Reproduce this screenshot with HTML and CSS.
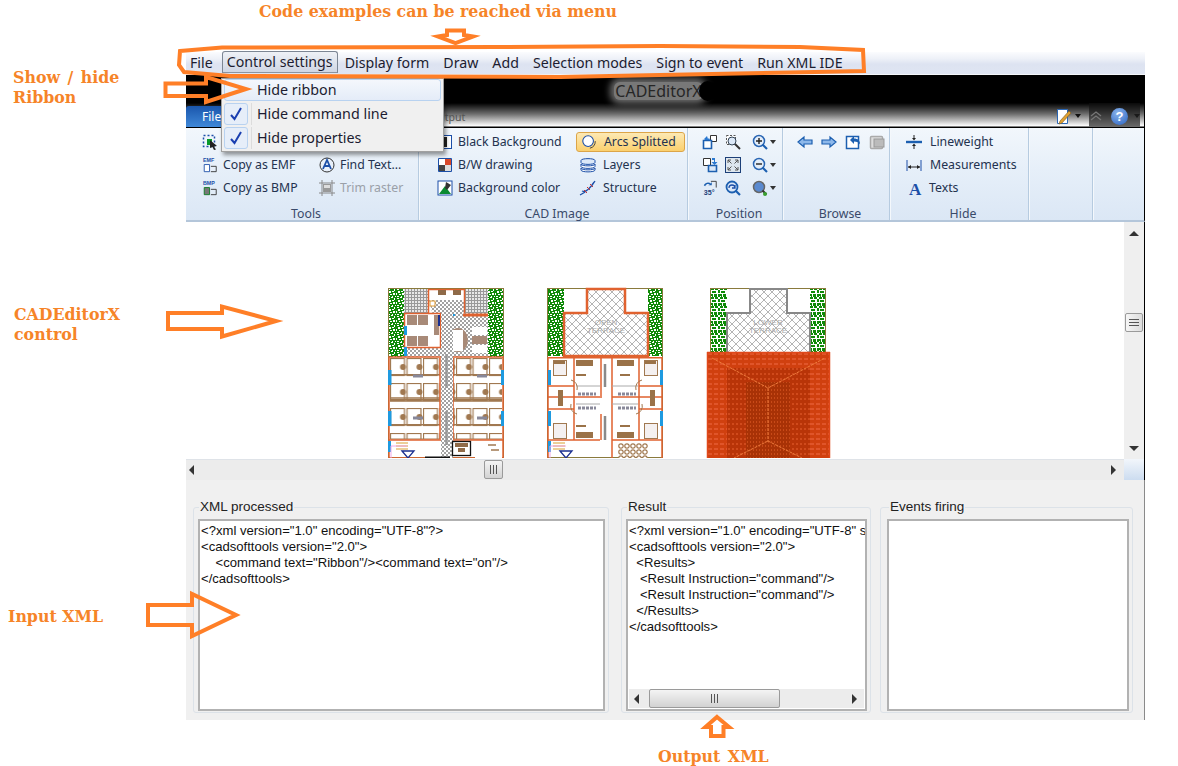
FILE: index.html
```html
<!DOCTYPE html>
<html lang="en">
<head>
<meta charset="utf-8">
<title>CADEditorX demo</title>
<link rel="stylesheet" href="styles.css">
</head>
<body>
<svg class="defs" width="0" height="0" aria-hidden="true">
  <defs>
    <symbol id="i-select" viewBox="0 0 16 16"><rect x="1.500" y="1.500" width="11" height="11" fill="none" stroke="#1c4fa8" stroke-width="1.500" stroke-dasharray="2 2"/><rect x="5" y="5" width="5" height="6" fill="#0a9a2a"/><path d="M8 6l7 6-3 .5 2 3-2 .5-1.500-3L8 14z" fill="#222"/></symbol>
    <symbol id="i-emf" viewBox="0 0 16 18"><text x="0" y="6" class="ico-txt">EMF</text><path d="M1.500 8.500h6v8h-6z" fill="#fff" stroke="#1c4fa8"/><path d="M9 10.500h6v6H9" fill="none" stroke="#333"/></symbol>
    <symbol id="i-bmp" viewBox="0 0 16 18"><text x="0" y="6" class="ico-txt">BMP</text><path d="M1.500 8.500h6v8h-6z" fill="#777" stroke="#0a7a20"/><path d="M9 10.500h6v6H9" fill="none" stroke="#333"/></symbol>
    <symbol id="i-find" viewBox="0 0 16 16"><circle cx="8" cy="8" r="7" fill="#e8f0fa" stroke="#333"/><path d="M4 12L8 3l4 9M5.500 9h5" fill="none" stroke="#1c4fa8" stroke-width="1.800"/></symbol>
    <symbol id="i-trim" viewBox="0 0 16 16"><path d="M3 0v16M13 0v16M0 3h16M0 13h16" stroke="#888" fill="none"/><rect x="4" y="4" width="8" height="8" fill="#999"/><rect x="5" y="5" width="6" height="3" fill="#ddd"/></symbol>
    <symbol id="i-black" viewBox="0 0 16 16"><rect x="1.500" y="1.500" width="13" height="13" fill="#fff" stroke="#1c4fa8"/><rect x="3" y="3" width="7" height="10" fill="#222"/></symbol>
    <symbol id="i-bw" viewBox="0 0 16 16"><rect x="1" y="1" width="14" height="14" rx="1" fill="#1c4fa8"/><path d="M2 2h6v6H2z" fill="#fff"/><path d="M8 2h6v6H8z" fill="#d9482a"/><path d="M2 8h6v6H2z" fill="#444"/><path d="M8 8h6v6H8z" fill="#ddd"/></symbol>
    <symbol id="i-bg" viewBox="0 0 16 16"><rect x="1" y="1" width="14" height="14" fill="#fff" stroke="#1c4fa8"/><path d="M2 14L8 6l6 8z" fill="#0a8a30"/><path d="M9 2l5 3-4 5-2-2z" fill="#333"/></symbol>
    <symbol id="i-arcs" viewBox="0 0 18 18"><circle cx="8" cy="8" r="6" fill="#fff" stroke="#1c4fa8" stroke-width="1.200"/><path d="M16 8a8 8 0 0 1-6 8" fill="none" stroke="#333"/></symbol>
    <symbol id="i-layers" viewBox="0 0 18 16"><path d="M2 3.500C2 1 16 1 16 3.500v2C16 8 2 8 2 5.500z" fill="#dbe8f8" stroke="#1c4fa8"/><path d="M2 7c0 2.500 14 2.500 14 0v2.500c0 2.500-14 2.500-14 0zM2 11c0 2.500 14 2.500 14 0v2c0 2.500-14 2.500-14 0z" fill="#fff" stroke="#1c4fa8"/></symbol>
    <symbol id="i-struct" viewBox="0 0 18 16"><path d="M1 15C5 13 12 8 16 1M3 11c4 2 8-3 12-9" fill="none" stroke="#1c4fa8" stroke-width="1.300"/><path d="M5 10l3 3M8 7l3 3M11 4l3 3" stroke="#c33" fill="none"/></symbol>
    <symbol id="i-p1" viewBox="0 0 16 16"><path d="M8.500 1.500h6v6h-6z" fill="#fff" stroke="#333"/><path d="M1.500 6.500h8v8h-8z" fill="#fff" stroke="#1c5fb0" stroke-width="1.600"/><path d="M2 5l3-3 1 3 1-1 1 2H3z" fill="#2a78d0"/></symbol>
    <symbol id="i-p2" viewBox="0 0 16 16"><path d="M1.500 1.500h7v7h-7z" fill="#fff" stroke="#333"/><path d="M6.500 8.500h8v6h-8z" fill="#dbe8f8" stroke="#1c5fb0" stroke-width="1.600"/><path d="M10 1h3v4h2.500L12.500 8 9.500 5H12V3h-2z" fill="#2a78d0"/></symbol>
    <symbol id="i-p3" viewBox="0 0 16 18"><path d="M9 1.500h6v7" fill="none" stroke="#333"/><path d="M1 6c2-4 6-4 8-2l1-2v4H6l2-1C6 4 4 4 2.500 7z" fill="#1c5fb0"/><text x="1" y="17" class="ico-deg">35°</text></symbol>
    <symbol id="i-zw" viewBox="0 0 16 16"><rect x="1.500" y="1.500" width="9" height="9" fill="#fff" stroke="#555" stroke-dasharray="2 1.500"/><circle cx="7" cy="7" r="4" fill="#dbe8f8" stroke="#345"/><path d="M10 10l5 5" stroke="#333" stroke-width="2"/></symbol>
    <symbol id="i-fit" viewBox="0 0 16 16"><rect x=".5" y=".5" width="15" height="15" fill="#dde6ee" stroke="#1c3f78"/><path d="M3 3l3.500 3.500M13 3L9.500 6.500M3 13l3.500-3.500M13 13L9.500 9.500M3 3h3M3 3v3M13 3h-3M13 3v3M3 13h3M3 13v-3M13 13h-3M13 13v-3" stroke="#555" fill="none"/></symbol>
    <symbol id="i-zprev" viewBox="0 0 16 16"><circle cx="7" cy="7" r="5.500" fill="#dbe8f8" stroke="#1c5fb0" stroke-width="1.800"/><path d="M10.500 10.500l4.500 4.500" stroke="#1c5fb0" stroke-width="2.200"/><path d="M4 8a3 3 0 0 1 6 0M10 5v3H7" fill="none" stroke="#1c4fa8" stroke-width="1.300"/></symbol>
    <symbol id="i-zin" viewBox="0 0 16 16"><circle cx="7" cy="7" r="5.500" fill="#e4eefa" stroke="#2a66b4" stroke-width="1.500"/><path d="M10.500 10.500l4.500 4.500" stroke="#1c5fb0" stroke-width="2.200"/><path d="M4 7h6M7 4v6" stroke="#222" stroke-width="1.400"/></symbol>
    <symbol id="i-zout" viewBox="0 0 16 16"><circle cx="7" cy="7" r="5.500" fill="#e4eefa" stroke="#2a66b4" stroke-width="1.500"/><path d="M10.500 10.500l4.500 4.500" stroke="#1c5fb0" stroke-width="2.200"/><path d="M4 7h6" stroke="#222" stroke-width="1.400"/></symbol>
    <symbol id="i-zglobe" viewBox="0 0 16 16"><circle cx="7" cy="7" r="5.500" fill="#5a8ad0" stroke="#666" stroke-width="1.500"/><path d="M10.500 10.500l4 4" stroke="#333" stroke-width="2"/><circle cx="13" cy="14" r="2" fill="#3aa030"/></symbol>
    <symbol id="i-left" viewBox="0 0 16 16"><path d="M1 8l6-5v3h8v4H7v3z" fill="#8db8ea" stroke="#1c5fb0" stroke-width="1.200"/></symbol>
    <symbol id="i-right" viewBox="0 0 16 16"><path d="M15 8L9 3v3H1v4h8v3z" fill="#8db8ea" stroke="#1c5fb0" stroke-width="1.200"/></symbol>
    <symbol id="i-undo" viewBox="0 0 16 16"><rect x="1.500" y="2.500" width="12" height="12" fill="#fff" stroke="#1c5fb0" stroke-width="1.500"/><path d="M5 6l4-4v2.500c4 0 6 2 6 6-1-2-3-3-6-3V10z" fill="#1c5fb0"/></symbol>
    <symbol id="i-redo" viewBox="0 0 16 16"><rect x="1.500" y="2.500" width="12" height="12" rx="1" fill="#ddd" stroke="#aaa" stroke-width="1.500"/><rect x="5" y="5" width="10" height="8" fill="#bbb" stroke="#999"/></symbol>
    <symbol id="i-lw" viewBox="0 0 16 16"><path d="M0 8h16" stroke="#1c5fb0" stroke-width="2.400"/><path d="M8 1v4M8 15v-4" stroke="#222"/><path d="M6 4h4L8 6.500zM6 12h4L8 9.500z" fill="#222"/></symbol>
    <symbol id="i-meas" viewBox="0 0 16 16"><path d="M1 3v11M15 3v11" stroke="#1c4fa8"/><path d="M2 10h12" stroke="#222"/><path d="M2 10l3-2v4zM14 10l-3-2v4z" fill="#222"/></symbol>
    <symbol id="i-text" viewBox="0 0 16 16"><text x="1" y="15" class="ico-a">A</text></symbol>
    <pattern id="p-green" width="9" height="9" patternUnits="userSpaceOnUse"><rect width="9" height="9" fill="#0f8a08"/><path d="M1 1h2v1H1zM4 0h2v1H4zM7 1h1v2H7zM2 3h2v2H2zM5 3h2v1H5zM0 5h1v2H0zM3 6h2v1H3zM6 5h2v2H6zM8 8h1v1H8zM1 8h2v1H1zM5 8h1v1H5z" fill="#fff"/></pattern>
    <pattern id="p-green2" width="9" height="9" patternUnits="userSpaceOnUse"><rect width="9" height="9" fill="#fff"/><path d="M0 0h3v2H0zM4 0h3v2H4zM7 2h2v3H7zM1 3h4v2H1zM0 6h2v2H0zM3 6h3v3H3zM7 6h2v3H7zM1 8h1v1H1z" fill="#0f8a08"/></pattern>
    <pattern id="p-cross" width="8" height="8" patternUnits="userSpaceOnUse"><rect width="8" height="8" fill="#fff"/><path d="M0 0l8 8M8 0L0 8" stroke="#b4b4b4"/></pattern>
    <pattern id="p-grid" width="3" height="3" patternUnits="userSpaceOnUse"><rect width="3" height="3" fill="#e8e8e8"/><path d="M0 .5h3M.5 0v3" stroke="#999"/></pattern>
    <pattern id="p-check" width="4" height="4" patternUnits="userSpaceOnUse"><rect width="4" height="4" fill="#fff"/><path d="M0 0h2v2H0zM2 2h2v2H2z" fill="#a2a2a2"/></pattern>
    <pattern id="p-desk" x="390" y="358" width="16.500" height="25" patternUnits="userSpaceOnUse"><rect x=".5" y=".5" width="14" height="17" fill="#fff" stroke="#a07850" stroke-width="1.200"/><circle cx="13" cy="9" r="3" fill="#a07850"/><rect x="0" y="16" width="16.500" height="1.500" fill="#a07850"/></pattern>
    <pattern id="p-chair" x="618" y="443" width="6" height="6" patternUnits="userSpaceOnUse"><circle cx="3" cy="3" r="2.200" fill="#fff" stroke="#a07850" stroke-width="1.200"/></pattern>
    <pattern id="p-roof" x="707" y="352" width="6" height="5" patternUnits="userSpaceOnUse"><rect width="6" height="5" fill="#d0400f"/><rect x="1" y="1" width="4" height="2" fill="#e0552a"/></pattern>
    <pattern id="p-roof2" x="707" y="352" width="4" height="5" patternUnits="userSpaceOnUse"><rect width="4" height="5" fill="#b83408"/><rect x="1" y="1" width="2" height="2" fill="#d04a1c"/></pattern>
    <pattern id="p-roof3" x="707" y="352" width="3" height="4" patternUnits="userSpaceOnUse"><rect width="3" height="4" fill="#a83206"/><rect x="1" y="1" width="1" height="2" fill="#c84a18"/></pattern>
  </defs>
</svg>

<main class="app">
  <nav class="menubar">
    <span class="menu-item">File</span>
    <span class="menu-item is-open">Control settings</span>
    <span class="menu-item">Display form</span>
    <span class="menu-item">Draw</span>
    <span class="menu-item">Add</span>
    <span class="menu-item">Selection modes</span>
    <span class="menu-item">Sign to event</span>
    <span class="menu-item">Run XML IDE</span>
    <ul class="dropdown">
      <li class="drop-row is-hover"><span class="check-slot"></span><span>Hide ribbon</span></li>
      <li class="drop-row"><span class="check-slot is-checked"><svg width="14" height="14" viewBox="0 0 14 14"><path d="M2 8l3.500 4L12 1" fill="none" stroke="#1a3fb0" stroke-width="2"/></svg></span><span>Hide command line</span></li>
      <li class="drop-row"><span class="check-slot is-checked"><svg width="14" height="14" viewBox="0 0 14 14"><path d="M2 8l3.500 4L12 1" fill="none" stroke="#1a3fb0" stroke-width="2"/></svg></span><span>Hide properties</span></li>
    </ul>
  </nav>

  <header class="titlebar">
    <div class="title"><span class="title-text">CADEditorX</span><span class="title-blob"></span></div>
    <div class="tabs">
      <span class="tab-file">File</span>
      <span class="tab-output">Output</span>
      <div class="qat">
        <svg width="18" height="18" viewBox="0 0 18 18"><path d="M2.500 2.500h10v14h-10z" fill="#fff" stroke="#2a66b4"/><path d="M5 14l9-10 2 2-9 10-3 1z" fill="#e0a030" stroke="#7a5a20" stroke-width=".6"/></svg>
        <span class="caret caret-black"></span>
        <svg class="qat-up" width="14" height="12" viewBox="0 0 14 12"><path d="M2 6l5-4 5 4M2 10l5-4 5 4" fill="none" stroke="#777" stroke-width="1.300"/></svg>
        <span class="help">?</span>
        <span class="caret caret-dark"></span>
      </div>
    </div>
  </header>

  <section class="ribbon">
    <div class="rgroup g-tools">
      <div class="rgrid tools-grid">
        <span class="ritem"><svg class="ico"><use href="#i-select"/></svg></span>
        <span class="ritem"></span>
        <span class="ritem"><svg class="ico"><use href="#i-emf"/></svg>Copy as EMF</span>
        <span class="ritem"><svg class="ico"><use href="#i-find"/></svg>Find Text...</span>
        <span class="ritem"><svg class="ico"><use href="#i-bmp"/></svg>Copy as BMP</span>
        <span class="ritem is-disabled"><svg class="ico"><use href="#i-trim"/></svg>Trim raster</span>
      </div>
      <div class="rlabel">Tools</div>
    </div>
    <div class="rgroup g-cad">
      <div class="rgrid cad-grid">
        <span class="ritem"><svg class="ico"><use href="#i-black"/></svg>Black Background</span>
        <span class="ritem is-active"><svg class="ico ico-lg"><use href="#i-arcs"/></svg>Arcs Splitted</span>
        <span class="ritem"><svg class="ico"><use href="#i-bw"/></svg>B/W drawing</span>
        <span class="ritem is-pad"><svg class="ico ico-lg"><use href="#i-layers"/></svg>Layers</span>
        <span class="ritem"><svg class="ico"><use href="#i-bg"/></svg>Background color</span>
        <span class="ritem is-pad"><svg class="ico ico-lg"><use href="#i-struct"/></svg>Structure</span>
      </div>
      <div class="rlabel">CAD Image</div>
    </div>
    <div class="rgroup g-pos">
      <div class="rgrid pos-grid">
        <svg class="ico"><use href="#i-p1"/></svg><svg class="ico"><use href="#i-zw"/></svg><span class="drop-ico"><svg class="ico"><use href="#i-zin"/></svg><span class="caret"></span></span>
        <svg class="ico"><use href="#i-p2"/></svg><svg class="ico"><use href="#i-fit"/></svg><span class="drop-ico"><svg class="ico"><use href="#i-zout"/></svg><span class="caret"></span></span>
        <svg class="ico"><use href="#i-p3"/></svg><svg class="ico"><use href="#i-zprev"/></svg><span class="drop-ico"><svg class="ico"><use href="#i-zglobe"/></svg><span class="caret"></span></span>
      </div>
      <div class="rlabel">Position</div>
    </div>
    <div class="rgroup g-browse">
      <div class="browse-row">
        <svg class="ico"><use href="#i-left"/></svg><svg class="ico"><use href="#i-right"/></svg><svg class="ico"><use href="#i-undo"/></svg><svg class="ico"><use href="#i-redo"/></svg>
      </div>
      <div class="rlabel">Browse</div>
    </div>
    <div class="rgroup g-hide">
      <div class="rgrid hide-grid">
        <span class="ritem"><svg class="ico"><use href="#i-lw"/></svg>Lineweight</span>
        <span class="ritem"><svg class="ico"><use href="#i-meas"/></svg>Measurements</span>
        <span class="ritem ritem-tight"><svg class="ico"><use href="#i-text"/></svg>Texts</span>
      </div>
      <div class="rlabel">Hide</div>
    </div>
    <div class="rgroup g-e1"></div>
    <div class="rgroup g-e2"></div>
  </section>

  <section class="viewport">
    <div class="drawing">
      <svg class="plans" width="938" height="236" viewBox="186 222 938 236">
        <!-- plan 1 -->
        <rect x="388.500" y="288.500" width="115" height="169" fill="#fff" stroke="#8a7a3c"/>
        <rect x="389" y="289" width="15" height="68" fill="url(#p-green)"/>
        <rect x="488" y="289" width="15" height="68" fill="url(#p-green)"/>
        <rect x="404" y="289" width="24" height="24" fill="url(#p-grid)"/>
        <rect x="465" y="289" width="23" height="24" fill="url(#p-grid)"/>
        <path d="M429 300h35v13h-23v44h-37v-10h37M441 313h12v145h-12z" fill="url(#p-check)"/>
        <rect x="441" y="313" width="47" height="44" fill="url(#p-check)"/>
        <rect x="404" y="347" width="37" height="10" fill="url(#p-check)"/>
        <path d="M428.500 313V289.500h36V313" fill="none" stroke="#e0622f" stroke-width="1.500"/>
        <rect x="438" y="290" width="8" height="5" fill="#8f6a48"/><rect x="453" y="290" width="8" height="5" fill="#8f6a48"/>
        <rect x="430" y="301" width="5" height="5" fill="#fff" stroke="#e09a30"/>
        <rect x="404.500" y="313.500" width="36" height="34" fill="#fff" stroke="#e0622f" stroke-width="1.500"/>
        <rect x="407" y="315" width="10" height="10" fill="#a88a78"/><rect x="418" y="315" width="10" height="10" fill="#a88a78"/>
        <rect x="407" y="336" width="10" height="10" fill="#a88a78"/><rect x="418" y="336" width="10" height="10" fill="#a88a78"/>
        <rect x="434" y="315" width="5" height="20" fill="#a88a78"/>
        <rect x="438" y="315" width="2" height="11" fill="#1a2f90"/>
        <rect x="441" y="314" width="14" height="2" fill="#1e9ae0"/>
        <rect x="404" y="326" width="3" height="9" fill="#1e9ae0"/><rect x="404" y="347" width="3" height="9" fill="#1e9ae0"/>
        <path d="M463 313.500h25v3h-25zM453 316h35" fill="#e0622f"/>
        <rect x="472" y="327" width="15" height="8" fill="#fff"/><rect x="472" y="345" width="15" height="8" fill="#fff"/>
        <rect x="472" y="336" width="15" height="8" fill="#a88a78"/>
        <ellipse cx="458" cy="340" rx="10" ry="12" fill="#a88a78"/>
        <rect x="453" y="330" width="10" height="21" fill="#fff"/>
        <rect x="389" y="357" width="114" height="101" fill="none" stroke="#e0622f" stroke-width="1.500"/>
        <rect x="390" y="358" width="50" height="81" fill="url(#p-desk)"/>
        <rect x="453" y="358" width="49" height="81" fill="url(#p-desk)"/>
        <path d="M390 398h50M453 398h49M390 401h50M453 401h49" stroke="#a07850" stroke-width="1.500"/>
        <path d="M390 439h50M453 439h49" stroke="#a07850"/>
        <path d="M440 358v81M453 358v81" stroke="#e0622f" stroke-width="1.500"/>
        <path d="M389 440h52M453 440h50" stroke="#e0622f" stroke-width="1.500"/>
        <rect x="441" y="313" width="12" height="145" fill="url(#p-check)"/>
        <path d="M446.500 354v34M446.500 411v34" stroke="#999" stroke-width="2.500"/>
        <path d="M413 376h10M477 376h10M413 418h10M477 418h10" stroke="#889" stroke-width="3"/>
        <path d="M388 370h3.500v15H388zM501 370h3v15h-3zM388 411h3.500v15H388zM501 411h3v15h-3zM388 441h3v11h-3z" fill="#1e9ae0"/>
        <path d="M396 443h12M396 446h12M396 449h12" stroke="#d9a030"/><path d="M395 446h-4v12M395 446h12" stroke="#f0a8e8" fill="none"/>
        <path d="M402 451l6 7 6-7z" fill="none" stroke="#1a2f90" stroke-width="1.300"/>
        <rect x="452.500" y="441.500" width="18" height="14" fill="#fff" stroke="#111" stroke-width="1.300"/>
        <rect x="455" y="443" width="13" height="4" fill="#8f6a48"/><rect x="458" y="448" width="7" height="4" fill="#8f6a48"/>
        <rect x="425" y="456.500" width="25" height="2" fill="#111"/>
        <path d="M475 441h27v17h-27z" fill="#fff"/><path d="M488 445h8M491 450h8" stroke="#a07850" stroke-width="1.500"/>
        <!-- plan 2 -->
        <rect x="547.500" y="288.500" width="115" height="169" fill="#fff" stroke="#8a7a3c"/>
        <rect x="548" y="289" width="16" height="67" fill="url(#p-green)"/>
        <rect x="648" y="289" width="14" height="67" fill="url(#p-green)"/>
        <path d="M564 313h23v-24h38v24h23v43h-84z" fill="url(#p-cross)" stroke="#e0622f" stroke-width="2.500"/>
        <text x="606" y="325" class="plan-txt">OPEN</text><text x="606" y="333" class="plan-txt">TERRACE</text>
        <rect x="548" y="357" width="114" height="1.500" fill="#e0622f"/>
        <path d="M548 357v101M662 357v101M574 358v82M601 358v40M612 358v82M639 358v82M548 386h26M639 386h23M548 397h52M612 397h50M548 409h26M639 409h23M548 440h52M612 440h50M612 440v18" fill="none" stroke="#e0622f" stroke-width="1.500"/>
        <path d="M601 414v26" stroke="#e0622f" stroke-width="1.500"/>
        <path d="M605 364v23M605 416v24" stroke="#8a8a8a" stroke-width="2.500"/>
        <path d="M548 370h3v15h-3zM660 370h3v15h-3zM548 411h3v15h-3zM660 411h3v15h-3zM548 441h3v11h-3z" fill="#1e9ae0"/>
        <g fill="#f4f0f0" stroke="#a07850"><rect x="553.500" y="360.500" width="13" height="15"/><rect x="553.500" y="423.500" width="13" height="15"/><rect x="644.500" y="360.500" width="13" height="15"/><rect x="644.500" y="423.500" width="13" height="15"/></g>
        <g fill="#9a7248"><rect x="576" y="360" width="17" height="6"/><rect x="576" y="432" width="17" height="6"/><rect x="617" y="360" width="17" height="6"/><rect x="617" y="432" width="17" height="6"/><rect x="554" y="361" width="11" height="3"/><rect x="645" y="361" width="11" height="3"/><rect x="558" y="390" width="5" height="16" /><rect x="650" y="390" width="5" height="16"/></g>
        <path d="M576 375h10M620 375h10M576 426h10M620 426h10" stroke="#9a7248" stroke-width="2"/>
        <path d="M576 386h24M612 386h26M576 404h24M612 404h26" stroke="#aaa"/>
        <path d="M578 394h18M618 394h18M578 408h18M618 408h18" stroke="#889" stroke-width="3" stroke-dasharray="3 1"/>
        <path d="M571 380a8 8 0 0 1 6 10M571 404a8 8 0 0 0 6 10M642 380a8 8 0 0 0-6 10M642 404a8 8 0 0 1-6 10" fill="none" stroke="#a07850"/>
        <rect x="618" y="443" width="30" height="15" fill="url(#p-chair)"/>
        <path d="M553 443h12M553 446h12M553 449h12" stroke="#d9a030"/><path d="M554 446h-4v12M554 446h12" stroke="#f0a8e8" fill="none"/>
        <path d="M560 451l6 7 6-7z" fill="none" stroke="#1a2f90" stroke-width="1.300"/>
        <!-- plan 3 -->
        <rect x="710.500" y="288.500" width="115" height="64" fill="#fff" stroke="#8a7a3c"/>
        <rect x="711" y="289" width="16" height="63" fill="url(#p-green2)"/>
        <rect x="810" y="289" width="15" height="63" fill="url(#p-green2)"/>
        <path d="M727 352v-39h23v-24h37v24h23v39" fill="url(#p-cross)" stroke="#888" stroke-width="2"/>
        <text x="768" y="325" class="plan-txt">LOWER</text><text x="768" y="333" class="plan-txt">TERRACE</text>
        <rect x="707" y="352" width="123" height="106" fill="url(#p-roof)"/>
        <rect x="727" y="368" width="83" height="90" fill="url(#p-roof2)"/>
        <rect x="746" y="382" width="44" height="76" fill="url(#p-roof3)"/>
        <path d="M707 352.500h123M707.500 352v106M829.500 352v106" stroke="#e0481a" stroke-width="1.500" fill="none"/>
        <path d="M712 358l56 30 57-30M768 388v53M768 441l-34 17M768 441l34 17" stroke="#ee7a3c" fill="none" stroke-dasharray="3 1"/>
      </svg>
    </div>
    <div class="vscroll">
      <span class="tri tri-up"></span>
      <span class="v-thumb"><i></i><i></i><i></i></span>
      <span class="tri tri-down"></span>
    </div>
  </section>
  <div class="hscroll-row">
    <div class="hscroll">
      <span class="tri tri-left"></span>
      <span class="h-thumb"><i></i><i></i><i></i></span>
      <span class="tri tri-right"></span>
    </div>
    <div class="corner"></div>
  </div>

  <section class="panels">
    <fieldset class="box box-xml">
      <legend>XML processed</legend>
      <pre class="code">&lt;?xml version="1.0" encoding="UTF-8"?&gt;
&lt;cadsofttools version="2.0"&gt;
    &lt;command text="Ribbon"/&gt;&lt;command text="on"/&gt;
&lt;/cadsofttools&gt;</pre>
    </fieldset>
    <fieldset class="box box-result">
      <legend>Result</legend>
      <div class="code-wrap">
        <pre class="code code-clip">&lt;?xml version="1.0" encoding="UTF-8" s
&lt;cadsofttools version="2.0"&gt;
  &lt;Results&gt;
   &lt;Result Instruction="command"/&gt;
   &lt;Result Instruction="command"/&gt;
  &lt;/Results&gt;
&lt;/cadsofttools&gt;</pre>
        <div class="mini-scroll">
          <span class="tri tri-left"></span>
          <span class="mini-thumb"><i></i><i></i><i></i></span>
          <span class="tri tri-right"></span>
        </div>
      </div>
    </fieldset>
    <fieldset class="box box-events">
      <legend>Events firing</legend>
      <div class="code"></div>
    </fieldset>
  </section>
</main>

<p class="note note-top">Code examples can be reached via menu</p>
<p class="note note-ribbon">Show / hide<br>Ribbon</p>
<p class="note note-control">CADEditorX<br>control</p>
<p class="note note-input">Input XML</p>
<p class="note note-output">Output XML</p>

<svg class="arrows" width="1178" height="766" viewBox="0 0 1178 766" aria-hidden="true">
  <path class="mark" d="M180 51L222 47.500L500 47L660 46L800 47L863 50L864 71L790 72.500L660 75L560 77L230 76L184 72L179 65Z"/>
  <path class="mark mark-fill" d="M447 30.500H464V35L473 36.500L455.500 43L438 36.500L447 35Z"/>
  <path class="mark" d="M165.500 83.500H206V77L246 89L206 102V96H165.500Z"/>
  <path class="mark" d="M168 313H222V306.500L276 321L222 336.500V329H168Z"/>
  <path class="mark" d="M148 605H192V594L236 615L192 636V625H148Z"/>
  <path class="mark mark-fill" d="M717 717L729 727H723.500V736H711V727H705.500Z"/>
</svg>
</body>
</html>
```

FILE: styles.css
```css
* { box-sizing: border-box; }
html, body { margin: 0; padding: 0; }
body {
  position: relative;
  width: 1178px;
  height: 766px;
  overflow: hidden;
  background: #fff;
  font-family: "Noto Sans", "Open Sans", sans-serif;
  color: #1a1a2a;
}
.defs { position: absolute; }
.ico-txt { font: 700 6px "Liberation Sans", sans-serif; fill: #1c4fa8; }
.ico-deg { font: 700 8px "Liberation Sans", sans-serif; fill: #1c3f78; }
.ico-a { font: 700 17px "Liberation Serif", serif; fill: #1c4fa8; }
.plan-txt { font: 8px "Liberation Sans", sans-serif; fill: #aaa; text-anchor: middle; }

.app {
  width: 959px;
  margin: 52px 0 0 186px;
  display: flex;
  flex-direction: column;
}

/* menu */
.menubar {
  position: relative;
  height: 23px;
  display: flex;
  align-items: center;
  gap: 14px;
  padding: 0 0 2px 4px;
  font-size: 14.200px;
  background: linear-gradient(#fbfcfe 0, #eef1f8 30%, #dde3f1 55%, #dfe5f2 100%);
  border-bottom: 1px solid #f4f6fa;
  color: #1c1c30;
}
.menu-item { white-space: nowrap; }
.menu-item.is-open {
  margin: 0 -7px 0 -5px;
  padding: 0 4px;
  height: 22px;
  line-height: 20px;
  border: 1px solid #7c8694;
  border-bottom-color: #8a94a2;
  border-radius: 3px 3px 0 0;
  background: linear-gradient(#eef1f6, #cfd6e4);
}
.dropdown {
  position: absolute;
  left: 35px;
  top: 26px;
  width: 223px;
  height: 74px;
  margin: 0;
  padding: 0 2px;
  list-style: none;
  background: #f0f0f0;
  border: 1px solid #a0a0a0;
  box-shadow: 2px 3px 4px rgba(0, 0, 0, .4);
  z-index: 3;
}
.drop-row {
  height: 24px;
  display: flex;
  align-items: center;
  gap: 5px;
  font-size: 14.300px;
  color: #1c1c30;
  border: 1px solid transparent;
  border-radius: 3px;
  background: linear-gradient(#dcdcdc, #dcdcdc) 26px 0 / 1px 100% no-repeat;
}
.drop-row > span:last-child { margin-top: -2px; }
.drop-row.is-hover {
  height: 22px;
  margin-bottom: 1px;
  background: linear-gradient(#f4f7fc, #e4ecf8);
  border-color: #b8d2f0;
}
.check-slot {
  width: 24px;
  height: 100%;
  display: flex;
  align-items: center;
  justify-content: center;
  margin-left: -1px;
  flex: none;
  margin-right: 4px;
}
.check-slot.is-checked {
  background: #e6eef9;
  border: 1px solid #b8d2f0;
  border-radius: 3px;
}

/* title */
.titlebar {
  height: 53px;
  display: flex;
  flex-direction: column;
  background: linear-gradient(#000 0, #000 28px, #6e6e6e 39px, #e8e8e8 49px, #fff 51px, #000 52px);
  border-right: 1px solid #000;
}
.title {
  height: 28px;
  display: flex;
  align-items: center;
  justify-content: center;
  padding-top: 4px;
}
.title-text {
  padding: 0 1px;
  height: 18px;
  line-height: 18px;
  font-size: 16px;
  color: #262626;
  background: #787878;
  border-radius: 6px;
  box-shadow: 0 0 7px 4px #6a6a6a;
}
.title-blob {
  position: relative;
  width: 17px;
  height: 20px;
  margin-left: -4px;
  border-radius: 50%;
  background: #000;
}
.tabs {
  height: 24px;
  display: flex;
  align-items: flex-end;
  position: relative;
}
.tab-file {
  width: 40px;
  height: 21px;
  padding: 2px 0 0 16px;
  font-size: 12px;
  color: #fff;
  background: linear-gradient(#1a56ac, #3f88d8);
  border-radius: 3px 3px 0 0;
}
.tab-output {
  margin: 0 0 1px 204px;
  font-size: 10.500px;
  line-height: 18px;
  color: #555;
}
.qat {
  margin-left: auto;
  margin-right: 4px;
  height: 24px;
  display: flex;
  align-items: center;
  padding-top: 2px;
  background: linear-gradient(#0a0a0a, #6a6a6a) 34px 0 / 100% 100% no-repeat;
}
.qat-up { margin: 0 8px 0 8px; }
.help {
  width: 17px;
  height: 17px;
  border-radius: 50%;
  background: radial-gradient(circle at 40% 30%, #8ab4ec, #2a62c0);
  color: #fff;
  font: 700 13px/17px "Liberation Sans", sans-serif;
  text-align: center;
}
.caret {
  display: inline-block;
  width: 0;
  height: 0;
  margin-left: 2px;
  border: 3.500px solid transparent;
  border-top: 4px solid #333;
  border-bottom: 0;
}
.caret-black { border-top-color: #111; }
.caret-dark { margin-left: 6px; border-top-color: #1a1a1a; }

/* ribbon */
.ribbon {
  height: 94px;
  display: flex;
  background: linear-gradient(#f2f7fc 0, #e6eff9 45%, #dbe7f5 100%);
  border-bottom: 2px solid #b4c6da;
  border-right: 1px solid #000;
  font-size: 12.300px;
}
.rgroup {
  display: flex;
  flex-direction: column;
  justify-content: space-between;
  padding-top: 2px;
  border-right: 1px solid #b6cbe0;
  box-shadow: 1px 0 0 #f4f8fc;
  flex: none;
}
.g-tools { width: 233px; }
.g-cad { width: 269px; }
.g-pos { width: 95px; }
.g-browse { width: 107px; }
.g-hide { width: 139px; }
.g-e1 { width: 64px; }
.g-e2 { flex: 1; border-right: 0; box-shadow: none; }
.rlabel {
  height: 12px;
  padding-left: 8px;
  line-height: 12px;
  text-align: center;
  color: #3a4a6a;
  font-size: 12.300px;
}
.rgrid { display: grid; grid-auto-rows: 23px; align-items: center; }
.tools-grid { grid-template-columns: 117px 1fr; padding-left: 16px; }
.cad-grid { grid-template-columns: 139px 1fr; padding-left: 18px; }
.pos-grid { grid-template-columns: 23px 27px 1fr; padding-left: 14px; }
.hide-grid { grid-template-columns: 1fr; padding-left: 16px; }
.browse-row { display: flex; gap: 8px; padding: 4px 0 0 14px; height: 23px; }
.ritem {
  display: flex;
  align-items: center;
  gap: 5px;
  white-space: nowrap;
  height: 20px;
  color: #23324f;
}
.is-disabled { color: #9aa0a8; }
.is-active {
  margin-right: 2px;
  padding-left: 3px;
  gap: 6px;
  border: 1px solid #dca548;
  border-radius: 3px;
  background: linear-gradient(#fde9b4, #fbd06e);
}
.is-pad { padding-left: 3px; gap: 6px; }
.ico { width: 16px; height: 16px; flex: none; display: block; }
.ico-lg { width: 18px; height: 16px; }
.g-hide .ico { margin-right: 3px; }
.g-hide .ritem-tight { padding-left: 2px; }
.g-hide .ritem-tight .ico { margin-right: 0; }
.drop-ico { display: flex; align-items: center; }

/* viewport */
.viewport {
  height: 237px;
  display: flex;
  background: #fff;
  border-right: 1px solid #000;
}
.drawing { flex: 1; min-width: 0; overflow: hidden; }
.plans { display: block; }
.vscroll {
  width: 20px;
  flex: none;
  position: relative;
  background: #efefef;
}
.tri { position: absolute; width: 0; height: 0; border: 5px solid transparent; }
.tri-up { top: 9px; left: 5px; border-bottom: 5px solid #333; border-top: 0; }
.tri-down { bottom: 8px; left: 5px; border-top: 5px solid #333; border-bottom: 0; }
.tri-left { left: 3px; top: 5px; border-right: 5px solid #333; border-left: 0; }
.tri-right { right: 8px; top: 5px; border-left: 5px solid #333; border-right: 0; }
.v-thumb {
  position: absolute;
  top: 91px;
  left: 1px;
  width: 18px;
  height: 19px;
  display: flex;
  flex-direction: column;
  align-items: center;
  justify-content: center;
  gap: 2px;
  background: linear-gradient(90deg, #f6f6f6, #dcdcdc);
  border: 1px solid #9a9a9a;
  border-radius: 2px;
}
.v-thumb i { width: 10px; height: 1px; background: #555; }
.hscroll-row { height: 21px; display: flex; border-right: 1px solid #000; }
.hscroll {
  flex: 1;
  position: relative;
  background: #ececec;
  border-top: 1px solid #dfe3e8;
}
.corner { width: 20px; background: linear-gradient(#f2f6fb, #ccdcf0); }
.h-thumb, .mini-thumb {
  position: absolute;
  top: 0;
  height: 19px;
  display: flex;
  align-items: center;
  justify-content: center;
  gap: 2px;
  background: linear-gradient(#f4f4f4, #d2d2d2);
  border: 1px solid #9a9a9a;
  border-radius: 2px;
}
.h-thumb { left: 298px; width: 19px; }
.h-thumb i, .mini-thumb i { width: 1px; height: 9px; background: #555; }

/* panels */
.panels {
  height: 240px;
  display: flex;
  align-items: flex-start;
  padding: 19px 0 0 7px;
  background: #f0f0f0;
  border-right: 1px solid #8a8a8a;
}
.box {
  height: 214px;
  margin: 0;
  padding: 4px 3px 1px 4px;
  border: 1px solid #dce2e8;
  border-radius: 3px;
  min-width: 0;
  flex: none;
}
.box legend {
  padding: 0 1px;
  margin-left: 1px;
  height: 16px;
  font: 13.500px/16px "Liberation Sans", sans-serif;
  color: #222;
}
.box-xml { width: 416px; margin-right: 12px; }
.box-result { width: 250px; margin-right: 9px; padding-right: 3px; }
.box-events { width: 253px; padding-left: 6px; }
.box-events legend { margin-left: 2px; }
.code, .code-wrap {
  display: block;
  width: 100%;
  height: 192px;
  margin: 0;
  background: #fff;
  border: 2px solid #b2b2b2;
}
.code {
  padding: 2px 1px;
  font: 13.100px/16px "Liberation Sans", sans-serif;
  color: #111;
  white-space: pre;
  overflow: hidden;
}
.code-wrap { position: relative; overflow: hidden; }
.code-clip { height: 168px; border: 0; }
.mini-scroll {
  position: absolute;
  left: 1px;
  right: 1px;
  bottom: 1px;
  height: 19px;
  background: #ececec;
}
.mini-thumb { left: 20px; width: 131px; }
.mini-scroll .tri-right { right: 7px; }
.mini-scroll .tri-left { left: 5px; }

/* annotations */
.note {
  position: absolute;
  margin: 0;
  font: 700 15.800px/20px "DejaVu Serif", serif;
  color: #f68428;
  white-space: nowrap;
}
.note-top { left: 259px; top: 2px; }
.note-ribbon { left: 13px; top: 68px; word-spacing: 2px; }
.note-control { left: 14px; top: 305px; }
.note-input { left: 8px; top: 607px; }
.note-output { left: 658px; top: 747px; word-spacing: 2px; }
.arrows { position: absolute; left: 0; top: 0; pointer-events: none; z-index: 5; }
.mark { fill: none; stroke: #ff7f27; stroke-width: 4; stroke-linejoin: miter; }
.mark-fill { fill: #fff; }
```
